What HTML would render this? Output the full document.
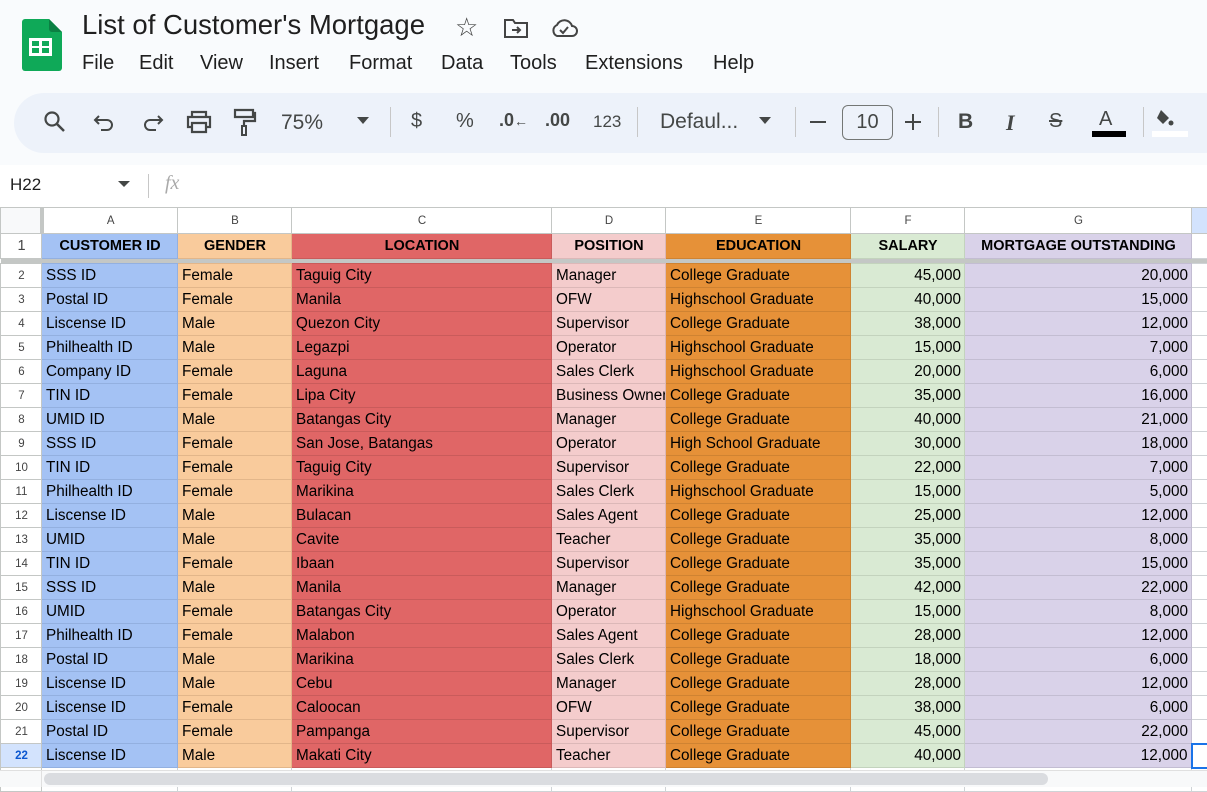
<!DOCTYPE html>
<html><head><meta charset="utf-8"><style>
*{box-sizing:border-box;margin:0;padding:0}
body{width:1207px;height:787px;overflow:hidden;background:#f9fbfd;font-family:"Liberation Sans",Arial,sans-serif;position:relative;color:#1f1f1f}
.abs{position:absolute}
.title{left:82px;top:9px;font-size:27.5px;color:#1f1f1f}
.menu{top:52px;font-size:20px;color:#1f1f1f}
.tb{left:14px;top:93px;width:1220px;height:60px;background:#edf2fa;border-radius:30px}
.ti{top:110px;font-size:20px;color:#444746}
.sep{width:1px;height:30px;background:#c7c7c7;top:107px}
.fbar{left:0;top:165px;width:1207px;height:42px;background:#fff}
table{border-collapse:collapse;table-layout:fixed;position:absolute;left:0;top:207px;width:1221px;background:#fff}
td{border:1px solid #cfd3d6;height:24px;font-size:15.3px;padding:0 3px 0 4px;white-space:nowrap;overflow:hidden;color:#000}
tr.ch td{height:26px;font-size:11.5px;text-align:center;color:#444;border-color:#c4c7c5}
tr.h td{height:25px;font-weight:bold;text-align:center;font-size:14.5px}
td.rn{font-size:11.5px;text-align:center;color:#444;background:#fff;border-color:#c4c7c5}
.a{background:#a4c2f4;border-color:#93b0e0}.b{background:#f9cb9c;border-color:#e2b68a}.c{background:#e06666;border-color:#c95b5b}
.d{background:#f4cccc;border-color:#dcb8b8}.e{background:#e69138;border-color:#cf8332}.f{background:#d9ead3;border-color:#c3d3bd}.g{background:#d9d2e9;border-color:#c3bdd2}
.r{text-align:right}
tr.fz td{height:5px;padding:0;background:#c4c7c5;border:0}
</style></head><body>
<svg class="abs" style="left:22px;top:19px" width="40" height="52" viewBox="0 0 40 52"><path d="M3 0h24l13 13v36a3 3 0 0 1-3 3H3a3 3 0 0 1-3-3V3a3 3 0 0 1 3-3z" fill="#0fa958"/><path d="M27 0l13 13H30a3 3 0 0 1-3-3z" fill="#0b8043"/><rect x="7" y="19" width="23" height="18" fill="#fff"/><rect x="10" y="22" width="7" height="5" fill="#0fa958"/><rect x="20" y="22" width="7" height="5" fill="#0fa958"/><rect x="10" y="29" width="7" height="5" fill="#0fa958"/><rect x="20" y="29" width="7" height="5" fill="#0fa958"/></svg>
<div class="abs title">List of Customer's Mortgage</div>
<div class="abs" style="left:455px;top:12px;font-size:26px;color:#444">☆</div>
<svg class="abs" style="left:503px;top:17px" width="26" height="22" viewBox="0 0 26 22"><path d="M2 3h8l2 3h12v14H2z" fill="none" stroke="#444" stroke-width="2"/><path d="M9 13h8M14 10l3 3-3 3" fill="none" stroke="#444" stroke-width="2"/></svg>
<svg class="abs" style="left:550px;top:17px" width="28" height="22" viewBox="0 0 28 22"><path d="M7 19h15a5 5 0 0 0 0-10 8 8 0 0 0-15-1 6 6 0 0 0 0 11z" fill="none" stroke="#444" stroke-width="2"/><path d="M10 13l3 3 5-6" fill="none" stroke="#444" stroke-width="2"/></svg>
<div class="abs menu" style="left:82px">File</div><div class="abs menu" style="left:139px">Edit</div><div class="abs menu" style="left:200px">View</div><div class="abs menu" style="left:269px">Insert</div><div class="abs menu" style="left:349px">Format</div><div class="abs menu" style="left:441px">Data</div><div class="abs menu" style="left:510px">Tools</div><div class="abs menu" style="left:585px">Extensions</div><div class="abs menu" style="left:713px">Help</div>
<div class="abs tb"></div>
<svg class="abs" style="left:43px;top:110px" width="24" height="24" viewBox="0 0 24 24"><circle cx="9" cy="9" r="6.5" fill="none" stroke="#444746" stroke-width="2.2"/><path d="M14 14l7 7" stroke="#444746" stroke-width="2.5"/></svg>
<svg class="abs" style="left:93px;top:112px" width="24" height="22" viewBox="0 0 24 22"><path d="M6 4L2 8l4 4M2 8h12a5 5 0 0 1 0 10H8" fill="none" stroke="#444746" stroke-width="2"/></svg>
<svg class="abs" style="left:140px;top:112px" width="24" height="22" viewBox="0 0 24 22"><path d="M18 4l4 4-4 4M22 8H10a5 5 0 0 0 0 10h6" fill="none" stroke="#444746" stroke-width="2"/></svg>
<svg class="abs" style="left:186px;top:109px" width="26" height="26" viewBox="0 0 26 26"><path d="M6 8V3h14v5M6 18H2V8h22v10h-4M6 14h14v9H6z" fill="none" stroke="#444746" stroke-width="2.2"/></svg>
<svg class="abs" style="left:233px;top:108px" width="24" height="30" viewBox="0 0 24 30"><path d="M2 2h18v7H2zM20 5h2v8H11v5" fill="none" stroke="#444746" stroke-width="2.2"/><rect x="9" y="18" width="4" height="9" fill="none" stroke="#444746" stroke-width="2"/></svg>
<div class="abs ti" style="left:281px;top:111px;font-size:21px">75%</div>
<div class="abs" style="left:357px;top:117px;border:6px solid transparent;border-top:7px solid #444746"></div>
<div class="abs sep" style="left:390px"></div>
<div class="abs ti" style="left:411px">$</div><div class="abs ti" style="left:456px">%</div>
<div class="abs ti" style="left:499px;font-weight:bold;font-size:18px">.0<span style="font-size:14px">←</span></div>
<div class="abs ti" style="left:545px;font-weight:bold;font-size:18px">.00</div>
<div class="abs ti" style="left:593px;font-size:17px;top:112px">123</div>
<div class="abs sep" style="left:637px"></div>
<div class="abs ti" style="left:660px;font-size:21px">Defaul...</div>
<div class="abs" style="left:759px;top:117px;border:6px solid transparent;border-top:7px solid #444746"></div>
<div class="abs sep" style="left:795px"></div>
<div class="abs" style="left:810px;top:121px;width:16px;height:2px;background:#444746"></div>
<div class="abs" style="left:842px;top:105px;width:51px;height:35px;border:1px solid #747775;border-radius:6px;font-size:20px;text-align:center;line-height:33px;color:#444746">10</div>
<div class="abs" style="left:905px;top:121px;width:16px;height:2px;background:#444746"></div>
<div class="abs" style="left:912px;top:114px;width:2px;height:16px;background:#444746"></div>
<div class="abs sep" style="left:938px"></div>
<div class="abs ti" style="left:958px;font-weight:bold;font-size:21px">B</div>
<div class="abs ti" style="left:1006px;font-style:italic;font-weight:bold;font-family:'Liberation Serif',serif;font-size:22px">I</div>
<div class="abs ti" style="left:1049px;text-decoration:line-through">S</div>
<div class="abs ti" style="left:1099px;top:108px">A</div>
<div class="abs" style="left:1092px;top:131px;width:34px;height:6px;background:#000"></div>
<div class="abs sep" style="left:1143px"></div>
<svg class="abs" style="left:1155px;top:108px" width="28" height="20" viewBox="0 0 28 20"><path d="M6 2l8 8-6 6-6-6z" fill="#444746"/><circle cx="16" cy="15" r="2.5" fill="#444746"/></svg>
<div class="abs" style="left:1152px;top:131px;width:36px;height:6px;background:#fff"></div>
<div class="abs fbar"></div>
<div class="abs" style="left:10px;top:175px;font-size:17px">H22</div>
<div class="abs" style="left:118px;top:181px;border:6px solid transparent;border-top:6px solid #444746"></div>
<div class="abs" style="left:148px;top:174px;width:1px;height:24px;background:#c7c7c7"></div>
<div class="abs" style="left:165px;top:172px;font-size:20px;color:#aaa;font-style:italic;font-family:'Liberation Serif',serif">fx</div>
<table>
<colgroup><col style="width:41px"><col style="width:136px"><col style="width:114px"><col style="width:260px"><col style="width:114px"><col style="width:185px"><col style="width:114px"><col style="width:227px"><col style="width:30px"></colgroup>
<tr class="ch"><td style="background:#f8f9fa;border-right:4px solid #c4c7c5"></td><td>A</td><td>B</td><td>C</td><td>D</td><td>E</td><td>F</td><td>G</td><td style="background:#d3e3fd"></td></tr>
<tr class="h"><td class="rn" style="font-weight:normal">1</td><td class="a">CUSTOMER ID</td><td class="b">GENDER</td><td class="c">LOCATION</td><td class="d">POSITION</td><td class="e">EDUCATION</td><td class="f">SALARY</td><td class="g">MORTGAGE OUTSTANDING</td><td></td></tr>
<tr class="fz"><td colspan="9"></td></tr>
<tr><td class="rn">2</td><td class="a">SSS ID</td><td class="b">Female</td><td class="c">Taguig City</td><td class="d">Manager</td><td class="e">College Graduate</td><td class="f r">45,000</td><td class="g r">20,000</td><td></td></tr>
<tr><td class="rn">3</td><td class="a">Postal ID</td><td class="b">Female</td><td class="c">Manila</td><td class="d">OFW</td><td class="e">Highschool Graduate</td><td class="f r">40,000</td><td class="g r">15,000</td><td></td></tr>
<tr><td class="rn">4</td><td class="a">Liscense ID</td><td class="b">Male</td><td class="c">Quezon City</td><td class="d">Supervisor</td><td class="e">College Graduate</td><td class="f r">38,000</td><td class="g r">12,000</td><td></td></tr>
<tr><td class="rn">5</td><td class="a">Philhealth ID</td><td class="b">Male</td><td class="c">Legazpi</td><td class="d">Operator</td><td class="e">Highschool Graduate</td><td class="f r">15,000</td><td class="g r">7,000</td><td></td></tr>
<tr><td class="rn">6</td><td class="a">Company ID</td><td class="b">Female</td><td class="c">Laguna</td><td class="d">Sales Clerk</td><td class="e">Highschool Graduate</td><td class="f r">20,000</td><td class="g r">6,000</td><td></td></tr>
<tr><td class="rn">7</td><td class="a">TIN ID</td><td class="b">Female</td><td class="c">Lipa City</td><td class="d">Business Owner</td><td class="e">College Graduate</td><td class="f r">35,000</td><td class="g r">16,000</td><td></td></tr>
<tr><td class="rn">8</td><td class="a">UMID ID</td><td class="b">Male</td><td class="c">Batangas City</td><td class="d">Manager</td><td class="e">College Graduate</td><td class="f r">40,000</td><td class="g r">21,000</td><td></td></tr>
<tr><td class="rn">9</td><td class="a">SSS ID</td><td class="b">Female</td><td class="c">San Jose, Batangas</td><td class="d">Operator</td><td class="e">High School Graduate</td><td class="f r">30,000</td><td class="g r">18,000</td><td></td></tr>
<tr><td class="rn">10</td><td class="a">TIN ID</td><td class="b">Female</td><td class="c">Taguig City</td><td class="d">Supervisor</td><td class="e">College Graduate</td><td class="f r">22,000</td><td class="g r">7,000</td><td></td></tr>
<tr><td class="rn">11</td><td class="a">Philhealth ID</td><td class="b">Female</td><td class="c">Marikina</td><td class="d">Sales Clerk</td><td class="e">Highschool Graduate</td><td class="f r">15,000</td><td class="g r">5,000</td><td></td></tr>
<tr><td class="rn">12</td><td class="a">Liscense ID</td><td class="b">Male</td><td class="c">Bulacan</td><td class="d">Sales Agent</td><td class="e">College Graduate</td><td class="f r">25,000</td><td class="g r">12,000</td><td></td></tr>
<tr><td class="rn">13</td><td class="a">UMID</td><td class="b">Male</td><td class="c">Cavite</td><td class="d">Teacher</td><td class="e">College Graduate</td><td class="f r">35,000</td><td class="g r">8,000</td><td></td></tr>
<tr><td class="rn">14</td><td class="a">TIN ID</td><td class="b">Female</td><td class="c">Ibaan</td><td class="d">Supervisor</td><td class="e">College Graduate</td><td class="f r">35,000</td><td class="g r">15,000</td><td></td></tr>
<tr><td class="rn">15</td><td class="a">SSS ID</td><td class="b">Male</td><td class="c">Manila</td><td class="d">Manager</td><td class="e">College Graduate</td><td class="f r">42,000</td><td class="g r">22,000</td><td></td></tr>
<tr><td class="rn">16</td><td class="a">UMID</td><td class="b">Female</td><td class="c">Batangas City</td><td class="d">Operator</td><td class="e">Highschool Graduate</td><td class="f r">15,000</td><td class="g r">8,000</td><td></td></tr>
<tr><td class="rn">17</td><td class="a">Philhealth ID</td><td class="b">Female</td><td class="c">Malabon</td><td class="d">Sales Agent</td><td class="e">College Graduate</td><td class="f r">28,000</td><td class="g r">12,000</td><td></td></tr>
<tr><td class="rn">18</td><td class="a">Postal ID</td><td class="b">Male</td><td class="c">Marikina</td><td class="d">Sales Clerk</td><td class="e">College Graduate</td><td class="f r">18,000</td><td class="g r">6,000</td><td></td></tr>
<tr><td class="rn">19</td><td class="a">Liscense ID</td><td class="b">Male</td><td class="c">Cebu</td><td class="d">Manager</td><td class="e">College Graduate</td><td class="f r">28,000</td><td class="g r">12,000</td><td></td></tr>
<tr><td class="rn">20</td><td class="a">Liscense ID</td><td class="b">Female</td><td class="c">Caloocan</td><td class="d">OFW</td><td class="e">College Graduate</td><td class="f r">38,000</td><td class="g r">6,000</td><td></td></tr>
<tr><td class="rn">21</td><td class="a">Postal ID</td><td class="b">Female</td><td class="c">Pampanga</td><td class="d">Supervisor</td><td class="e">College Graduate</td><td class="f r">45,000</td><td class="g r">22,000</td><td></td></tr>
<tr><td class="rn" style="background:#d3e3fd;font-weight:bold;color:#0b57d0">22</td><td class="a">Liscense ID</td><td class="b">Male</td><td class="c">Makati City</td><td class="d">Teacher</td><td class="e">College Graduate</td><td class="f r">40,000</td><td class="g r">12,000</td><td style="border:2px solid #1a73e8"></td></tr>
<tr><td class="rn" style="height:6px"></td><td></td><td></td><td></td><td></td><td></td><td></td><td></td><td></td></tr>
</table>
<div class="abs" style="left:0;top:770px;width:1207px;height:17px;background:#f8f9fa;border-top:1px solid #e0e0e0"></div>
<div class="abs" style="left:41px;top:770px;width:1px;height:17px;background:#e0e0e0"></div>
<div class="abs" style="left:44px;top:773px;width:1004px;height:12px;background:#dadce0;border-radius:6px"></div>
</body></html>
